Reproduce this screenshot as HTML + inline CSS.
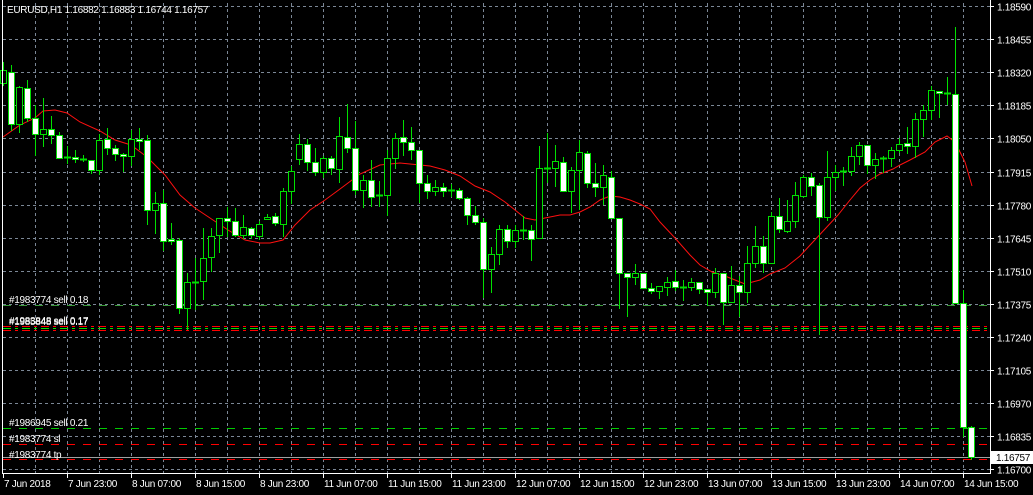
<!DOCTYPE html>
<html><head><meta charset="utf-8"><style>
html,body{margin:0;padding:0;background:#000;width:1033px;height:495px;overflow:hidden}
svg{display:block}
text{font-family:"Liberation Sans",sans-serif;font-size:10px;letter-spacing:-0.3px;fill:#fff}
</style></head><body>
<svg id="s" width="1033" height="495" xmlns="http://www.w3.org/2000/svg"></svg>
<script>
var s=document.getElementById('s'),h='';
var py=['1.18590','1.18455','1.18320','1.18185','1.18050','1.17915','1.17780','1.17645','1.17510','1.17375','1.17240','1.17105','1.16970','1.16835','1.16700'];
for(var k=0;k<15;k++){var y=Math.round(6+k*33.1)+0.5;
h+='<line x1="3" x2="990" y1="'+y+'" y2="'+y+'" stroke="#7b8796" stroke-dasharray="3,3"/>';
h+='<line x1="990" x2="994" y1="'+y+'" y2="'+y+'" stroke="#fff"/>';
h+='<text x="997" y="'+(y+4)+'">'+py[k]+'</text>';}
for(var x=35;x<990;x+=32){h+='<line x1="'+(x+0.5)+'" x2="'+(x+0.5)+'" y1="3" y2="473" stroke="#7b8796" stroke-dasharray="3,3"/>';}
function hl(y,c,d){h+='<line x1="3" x2="990" y1="'+y+'" y2="'+y+'" stroke="'+c+'" stroke-dasharray="'+d+'"/>';}
hl(305.5,'#3a9a3a','8,8');
hl(326.5,'#ff0000','8,4,3,4');hl(328.5,'#00e000','8,4,3,4');hl(330.5,'#ff0000','8,4,3,4');
hl(428.5,'#00cc00','8,8');
hl(444.5,'#ff0000','8,8');
h+='<line x1="3" x2="990" y1="457.5" y2="457.5" stroke="#a0a0a0"/>';
hl(459.5,'#ff0000','8,8');
var ma=[[3,137],[20,125],[35,118],[43,111],[55,110],[67,113],[80,122],[100,131],[115,140],[131,145],[147,157],[165,175],[180,195],[195,208],[210,218],[228,230],[245,240],[260,243],[270,243],[283,240],[295,225],[310,210],[325,200],[340,189],[360,174],[380,165],[400,163],[410,164],[430,166],[445,170],[460,176],[475,186],[490,192],[505,202],[515,210],[525,218],[535,220],[545,218],[560,215],[570,215],[580,212],[590,207],[600,200],[610,196],[620,197],[630,200],[640,204],[650,209],[660,222],[675,238],[690,255],[700,265],[712,272],[725,276],[745,284],[760,280],[770,274],[785,268],[800,256],[812,243],[825,229],[838,215],[850,200],[860,188],[870,180],[880,174],[893,169],[900,165],[910,160],[925,152],[935,142],[947,136],[955,142],[965,162],[972,186]];
h+='<polyline fill="none" stroke="#ff1010" stroke-width="1" points="'+ma.map(function(p){return p.join(',')}).join(' ')+'"/>';
var c=[[62,70,83,86,'h'],[65,72,124,131,'w'],[86,87,124,133,'h'],[80,88,118,122,'w'],[105,118,134,156,'w'],[98,129,134,147,'h'],[116,129,135,144,'w'],[132,135,158,159,'w'],[146,157,158,164,'f'],[150,157,159,163,'w'],[155,159,160,162,'f'],[160,160,170,174,'w'],[134,140,170,175,'h'],[128,139,148,155,'w'],[145,148,154,161,'w'],[153,154,156,172,'w'],[130,139,156,166,'h'],[128,139,141,150,'w'],[135,140,210,225,'w'],[192,203,210,234,'h'],[190,203,241,251,'w'],[223,239,241,245,'w'],[238,240,308,314,'w'],[273,282,308,330,'h'],[258,282,282,310,'f'],[228,258,281,300,'h'],[228,236,257,272,'h'],[219,218,235,253,'h'],[207,218,221,237,'w'],[208,221,235,237,'w'],[215,227,235,239,'h'],[227,228,235,239,'w'],[221,224,236,240,'h'],[214,217,219,220,'h'],[213,216,223,226,'w'],[188,191,224,237,'h'],[166,171,191,204,'h'],[134,144,159,165,'h'],[139,144,162,171,'w'],[148,162,172,176,'w'],[156,158,172,178,'h'],[156,158,168,175,'w'],
[117,136,169,183,'h'],[104,137,148,153,'w'],[121,148,190,195,'w'],[175,180,190,208,'h'],[160,180,197,207,'w'],[181,195,195,207,'f'],[150,158,195,216,'h'],[133,138,158,169,'h'],[120,137,142,156,'w'],[127,142,150,160,'w'],[150,150,183,203,'w'],[175,183,191,199,'w'],[180,187,191,196,'h'],[183,187,191,197,'w'],[184,190,190,197,'f'],[188,190,198,200,'w'],[197,198,215,225,'w'],[206,215,222,225,'w'],[218,222,269,298,'w'],[247,254,269,293,'h'],[225,229,254,265,'h'],[225,229,241,248,'w'],[225,230,241,248,'h'],[216,230,230,240,'f'],[225,230,239,261,'w'],[146,168,238,238,'h'],[133,168,168,183,'f'],[145,161,168,187,'h'],[157,162,191,192,'w'],[167,170,191,213,'h'],[140,152,170,210,'h'],[151,153,183,188,'w'],[163,183,187,197,'w'],[165,175,187,205,'h'],[171,177,218,218,'w'],[218,218,273,309,'w'],[273,273,277,317,'w'],[264,273,277,285,'h'],[273,273,288,288,'w'],[283,288,291,294,'w'],[286,286,291,299,'h'],
[277,282,287,296,'h'],[270,281,287,291,'w'],[280,287,287,301,'f'],[278,282,287,291,'h'],[282,282,289,294,'w'],[289,289,292,306,'w'],[268,273,292,298,'h'],[273,273,302,325,'w'],[266,285,302,302,'h'],[276,285,292,317,'w'],[246,263,292,303,'h'],[226,246,263,268,'h'],[236,246,263,273,'w'],[212,216,263,263,'h'],[198,216,229,233,'w'],[200,221,231,233,'h'],[182,195,221,228,'h'],[175,177,196,198,'h'],[173,177,186,196,'w'],[183,185,217,335,'w'],[151,177,217,221,'h'],[165,172,177,191,'h'],[167,171,171,186,'f'],[147,156,171,176,'h'],[142,145,156,165,'h'],[145,145,165,174,'w'],[153,159,165,179,'h'],[156,158,158,173,'f'],[147,150,158,167,'h'],[138,144,150,153,'h'],[127,143,146,154,'w'],[113,119,146,158,'h'],[105,110,119,137,'h'],[86,90,110,120,'h'],[91,91,93,118,'w'],[77,93,93,105,'f'],[27,94,303,303,'w'],[290,303,427,437,'w'],[426,427,457,460,'w']];
for(var i=0;i<c.length;i++){var x=3+8*i,d=c[i],xm=x+0.5;
h+='<line x1="'+xm+'" x2="'+xm+'" y1="'+d[0]+'" y2="'+d[3]+'" stroke="#00e000"/>';
if(d[4]=='f'||d[2]-d[1]<1){h+='<line x1="'+(x-3)+'" x2="'+(x+4)+'" y1="'+(d[1]+0.5)+'" y2="'+(d[1]+0.5)+'" stroke="#00e000" stroke-width="2"/>';}
else h+='<rect x="'+(x-2.5)+'" y="'+(d[1]+0.5)+'" width="6" height="'+(d[2]-d[1])+'" fill="'+(d[4]=='w'?'#fff':'#000')+'" stroke="#00e000"/>';}
function t(x,y,s){h+='<text x="'+x+'" y="'+y+'">'+s+'</text>';}
t(9,303,'#1983774 sell 0.18');t(9,325,'#1985848 sell 0.17');t(9,324,'#1983848 sell 0.17');
t(9,426,'#1986945 sell 0.21');t(9,442,'#1983774 sl');t(9,458,'#1983774 tp');
t(7,13,'EURUSD,H1  1.16882 1.16883 1.16744 1.16757');
h+='<line x1="2.5" x2="2.5" y1="0" y2="474" stroke="#fff"/>';
h+='<line x1="990.5" x2="990.5" y1="0" y2="474" stroke="#fff"/>';
h+='<line x1="2" x2="991" y1="473.5" y2="473.5" stroke="#fff"/>';
h+='<rect x="991" y="451" width="42" height="13" fill="#fff"/><text x="996" y="461" style="fill:#000">1.16757</text>';
var dl=['7 Jun 2018','7 Jun 23:00','8 Jun 07:00','8 Jun 15:00','8 Jun 23:00','11 Jun 07:00','11 Jun 15:00','11 Jun 23:00','12 Jun 07:00','12 Jun 15:00','12 Jun 23:00','13 Jun 07:00','13 Jun 15:00','13 Jun 23:00','14 Jun 07:00','14 Jun 15:00'];
for(var k=0;k<16;k++){var x=3+64*k;h+='<line x1="'+(x+0.5)+'" x2="'+(x+0.5)+'" y1="473" y2="478" stroke="#fff"/>';t(x+1,487,dl[k]);}
s.innerHTML=h;
</script>
</body></html>
